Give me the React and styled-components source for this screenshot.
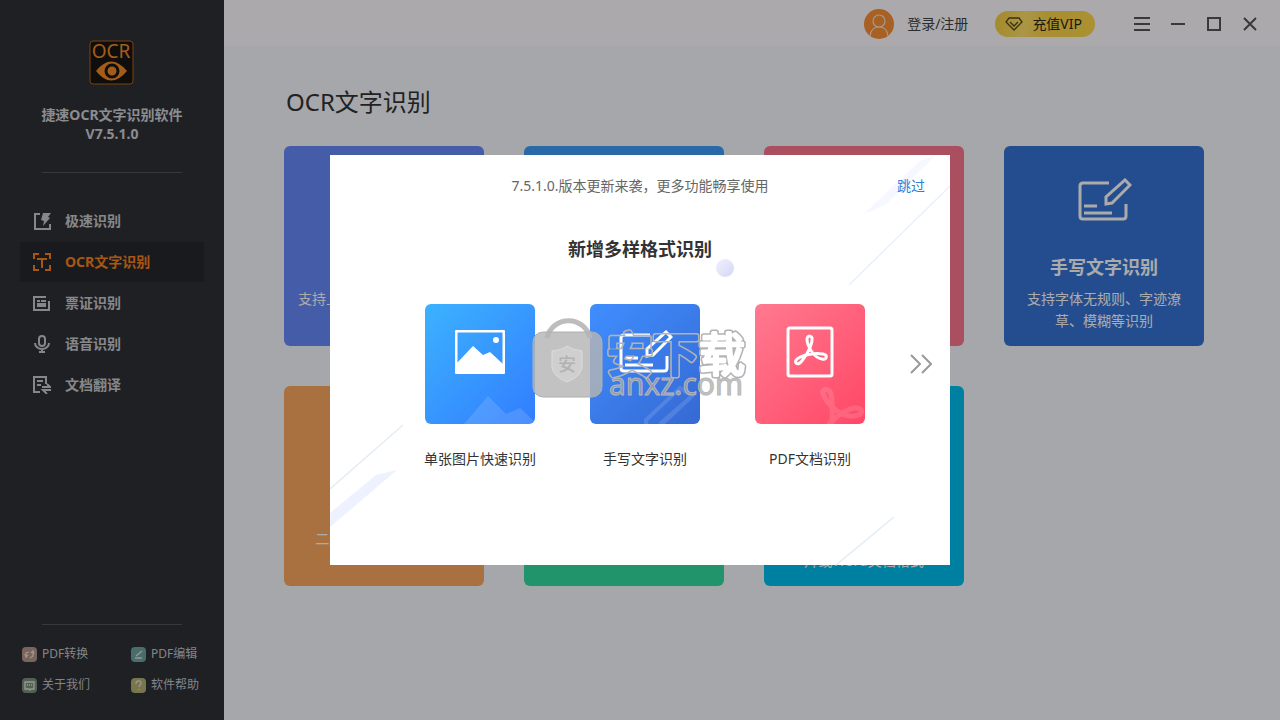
import React, { useState } from "react";
import styled, { createGlobalStyle } from "styled-components";

const navItems = [
  { name: "极速识别", icon: "fast" },
  { name: "OCR文字识别", icon: "ocr" },
  { name: "票证识别", icon: "ticket" },
  { name: "语音识别", icon: "voice" },
  { name: "文档翻译", icon: "translate" },
];

const footLinks = [
  { name: "PDF转换", icon: "convert", color: "#b8958a" },
  { name: "PDF编辑", icon: "edit", color: "#6da3a3" },
  { name: "关于我们", icon: "about", color: "#79937f" },
  { name: "软件帮助", icon: "help", color: "#b3b074" },
];

const cards = [
  { color: "#6789fb", title: "单张快速识别", desc: "支持上传单张图片,快速识别" },
  { color: "#3f9dfb", title: "批量识别", desc: "支持批量图片识别" },
  { color: "#fc768e", title: "PDF文档识别", desc: "支持PDF文档识别" },
  {
    color: "#3774d5",
    title: "手写文字识别",
    desc: "支持字体无规则、字迹潦\n草、模糊等识别",
    icon: true,
  },
  { color: "#fca95e", title: "二维码识别", desc: "二维码图片快速识别..." },
  { color: "#34dda1", title: "局部识别", desc: "支持图片局部识别" },
  { color: "#00bfef", title: "图片转换", desc: "支持将图片转为图\n片或Word文档格式" },
];

const navIcons = {
  fast: (
    <>
      <path d="M7 2H2v15h15v-5" fill="none" stroke="currentColor" strokeWidth="2" />
      <path d="M10 1h8l-3 4 2 1-7 8 1-5-3-1z" fill="currentColor" />
    </>
  ),
  ocr: (
    <path
      d="M1 6V1h5M12 1h5v5M17 12v5h-5M6 17H1v-5M4 6h10M9 6v9"
      fill="none"
      stroke="currentColor"
      strokeWidth="2"
    />
  ),
  ticket: (
    <>
      <path d="M13 3H1v13h15V7" fill="none" stroke="currentColor" strokeWidth="2" />
      <path d="M4 6h3v2H4zM8 6h5v2H8zM4 9h9v4H4z" fill="currentColor" />
    </>
  ),
  voice: (
    <>
      <rect x="6" y="1" width="6" height="10" rx="3" fill="none" stroke="currentColor" strokeWidth="2" />
      <path d="M2 8a7 6 0 0 0 14 0M9 14v3M6 17h6" fill="none" stroke="currentColor" strokeWidth="2" />
    </>
  ),
  translate: (
    <>
      <path d="M7 16H1V1h12v7M4 5h6M4 9h4" fill="none" stroke="currentColor" strokeWidth="2" />
      <path d="M9 11h8l-3-3M18 14h-8l4 4" fill="none" stroke="currentColor" strokeWidth="2" />
    </>
  ),
};

const footIcons = {
  convert: <path d="M4 10V6l3-1M3 7l1 3 2-2M11 5v4l-3 2M9 6l2-2 1 3" />,
  edit: <path d="M4 11h7M5 9l6-5" />,
  about: <path d="M3 4h9v7H9l-1 1-1-1H3zM5 7h1M7 7h1M9 7h1" />,
  help: <path d="M5 6c0-4 5-4 5-1 0 2-2 2-2 4M8 11v1" />,
};

const HandwriteIcon = () => (
  <svg width="56" height="44" viewBox="0 0 56 44" fill="none" stroke="currentColor" strokeWidth="3">
    <path d="M33 5H7Q4 5 4 8v30q0 3 3 3h40q3 0 3-3V26" />
    <path d="M8 28h13M8 35h28" />
    <path d="M30 26v-7L49 2l5 5-18 18z" />
  </svg>
);

const PictureIcon = () => (
  <svg width="50" height="44" viewBox="0 0 50 44">
    <rect x="1" y="1" width="48" height="42" rx="2" fill="none" stroke="#fff" strokeWidth="3" />
    <path d="M2 33L18 16l10 9 7-3 13 12v8H2z" fill="#fff" />
    <circle cx="41" cy="10" r="3" fill="#fff" />
  </svg>
);

const PdfIcon = () => (
  <svg width="48" height="52" viewBox="0 0 48 52" fill="none" stroke="#fff" strokeWidth="3">
    <rect x="2" y="2" width="44" height="48" rx="2" />
    <path d="M21 13c0-4 6-4 5 1 0 4-4 13-8 18-3 5-6 7-8 5-2-3 3-6 10-8s12-2 17-1c5 1 4 6-1 5-8-1-15-13-15-20z" />
  </svg>
);

const features = [
  {
    name: "单张图片快速识别",
    from: "#3cb2ff",
    to: "#327dfe",
    icon: <PictureIcon />,
    ghost: <path d="M39 120l24-28 18 18 14-6 15 14v2z" fill="#fff" />,
  },
  {
    name: "手写文字识别",
    from: "#3f8eff",
    to: "#3669d3",
    icon: <HandwriteIcon />,
    ghost: <path d="M56 120v-4l34-32 12 8-32 28M72 120l28-26" fill="none" stroke="#fff" strokeWidth="4" />,
  },
  {
    name: "PDF文档识别",
    from: "#ff7a90",
    to: "#ff4766",
    icon: <PdfIcon />,
    ghost: (
      <path
        d="M68 90c-2-6 7-6 8 0 2 8 1 18 1 32M68 90c4 10 18 24 31 22 10-1 10-8 2-8-8 0-18 7-28 17"
        fill="none"
        stroke="#fff"
        strokeWidth="5"
      />
    ),
  },
];

const Watermark = () => (
  <WatermarkArt width="224" height="84" viewBox="0 0 224 84" aria-hidden="true">
    <path d="M15 20a22 22 0 0 1 43 0" fill="none" stroke="#bdbdbd" strokeWidth="5" />
    <rect x="1" y="14" width="69" height="65" rx="10" fill="#b5b5b5" fillOpacity=".82" stroke="#b0b0b0" />
    <path d="M20 33q10-1 15-5 6 4 15 5v17q-2 9-15 14-13-5-15-14z" fill="#cfcfcf" stroke="#dcdcdc" />
    <text x="35" y="53" fontSize="18" fontWeight="500" textAnchor="middle" fill="#b2b2b2">
      安
    </text>
    <defs>
      <text id="brand" x="75" y="53" fontSize="46">
        安下载
      </text>
    </defs>
    <mask id="outline" maskUnits="userSpaceOnUse" x="70" y="0" width="154" height="84">
      <g strokeLinejoin="round">
        <use href="#brand" fill="#fff" stroke="#fff" strokeWidth="6" />
        <use href="#brand" fill="#000" stroke="#000" strokeWidth="3" />
      </g>
    </mask>
    <rect x="70" y="0" width="154" height="84" fill="#b3b3b3" mask="url(#outline)" />
    <text x="77" y="77" fontSize="30" fill="#a8a8a8" fillOpacity=".7" stroke="#b8b8b8" strokeWidth="1">
      anxz.com
    </text>
  </WatermarkArt>
);

export default function App() {
  const [current, setCurrent] = useState("OCR文字识别");
  const [showUpdate, setShowUpdate] = useState(true);

  return (
    <>
      <GlobalStyle />
      <Shell>
        <Sidebar>
          <Logo viewBox="0 0 46 45" aria-hidden="true">
            <rect x="1" y="1" width="43" height="43" rx="3" fill="#181512" stroke="#b5641a" />
            <text x="22" y="18" fontSize="19" textAnchor="middle" fill="#f38b26">
              OCR
            </text>
            <path d="M7 31q15-19 31 0-16 19-31 0z" fill="#f38b26" />
            <circle cx="23" cy="31" r="6" fill="none" stroke="#181512" strokeWidth="3" />
          </Logo>
          <AppName>
            捷速OCR文字识别软件
            <br />
            V7.5.1.0
          </AppName>
          <Divider />
          <Nav>
            {navItems.map(item => (
              <NavButton
                key={item.name}
                $active={item.name === current}
                onClick={() => setCurrent(item.name)}
              >
                <svg width="18" height="18" viewBox="0 0 18 18">
                  {navIcons[item.icon]}
                </svg>
                {item.name}
              </NavButton>
            ))}
          </Nav>
          <SidebarFoot>
            <Divider />
            <FootLinks>
              {footLinks.map(link => (
                <FootLink key={link.name} href="#">
                  <svg width="15" height="15" viewBox="0 0 15 15">
                    <rect width="15" height="15" rx="4" fill={link.color} />
                    <g fill="none" stroke="#e6e2da" strokeWidth="1.3">
                      {footIcons[link.icon]}
                    </g>
                  </svg>
                  {link.name}
                </FootLink>
              ))}
            </FootLinks>
          </SidebarFoot>
        </Sidebar>

        <Body>
          <TopBar>
            <Login>
              <svg width="30" height="30" viewBox="0 0 30 30">
                <circle cx="15" cy="15" r="15" fill="#fb8f35" />
                <g fill="none" stroke="#f4e3d6" strokeWidth="1.2">
                  <circle cx="15" cy="12" r="6" />
                  <path d="M6 27q1-9 9-9t9 9" />
                </g>
              </svg>
              登录/注册
            </Login>
            <Vip>
              <svg width="18" height="16" viewBox="0 0 18 16" fill="none" stroke="#55481a" strokeWidth="1.3">
                <path d="M4 2h10l3 4-8 8-8-8z" />
                <path d="M5 6l4 4 4-4" />
              </svg>
              充值VIP
            </Vip>
            <WindowButtons>
              <WindowButton aria-label="菜单">
                <svg width="18" height="18" viewBox="0 0 18 18">
                  <path d="M1 3h16M1 9h16M1 15h16" />
                </svg>
              </WindowButton>
              <WindowButton aria-label="最小化">
                <svg width="18" height="18" viewBox="0 0 18 18">
                  <path d="M2 9h14" />
                </svg>
              </WindowButton>
              <WindowButton aria-label="最大化">
                <svg width="18" height="18" viewBox="0 0 18 18">
                  <path d="M3 3h12v12H3z" />
                </svg>
              </WindowButton>
              <WindowButton aria-label="关闭">
                <svg width="18" height="18" viewBox="0 0 18 18">
                  <path d="M3 3l12 12M15 3L3 15" />
                </svg>
              </WindowButton>
            </WindowButtons>
          </TopBar>
          <Content>
            <PageTitle>OCR文字识别</PageTitle>
            <CardGrid>
              {cards.map(card => (
                <Card key={card.title} $color={card.color}>
                  <CardIcon>{card.icon && <HandwriteIcon />}</CardIcon>
                  <CardTitle>{card.title}</CardTitle>
                  <CardDesc>{card.desc}</CardDesc>
                </Card>
              ))}
            </CardGrid>
          </Content>
        </Body>
      </Shell>

      {showUpdate && (
        <Overlay>
          <Dialog role="dialog" aria-label="版本更新">
            <Backdrop viewBox="0 0 620 410" aria-hidden="true">
              <path d="M0 358L46 320 67 315 0 372z" fill="#eef2ff" />
              <path d="M0 334L73 270" stroke="#e2ecf6" strokeWidth="1.4" />
              <path d="M506 410L564 362" stroke="#e2ecf6" strokeWidth="1.4" />
              <path d="M519 130L620 31" stroke="#eaeff9" strokeWidth="1.4" />
              <path d="M533 60L590 6 606 0 556 49z" fill="#f6f8ff" />
              <defs>
                <linearGradient id="ball" x1="0" y1="0" x2="1" y2="1">
                  <stop offset="0" stopColor="#f1f1fe" />
                  <stop offset="1" stopColor="#d5d5f7" />
                </linearGradient>
              </defs>
              <circle cx="395" cy="113" r="9" fill="url(#ball)" />
            </Backdrop>
            <DialogTop>
              <Notice>7.5.1.0.版本更新来袭，更多功能畅享使用</Notice>
              <Skip onClick={() => setShowUpdate(false)}>跳过</Skip>
            </DialogTop>
            <DialogTitle>新增多样格式识别</DialogTitle>
            <FeatureRow>
              <FeatureList>
                {features.map(item => (
                  <Feature key={item.name}>
                    <Tile $from={item.from} $to={item.to}>
                      <Ghost viewBox="0 0 110 120">{item.ghost}</Ghost>
                      {item.icon}
                    </Tile>
                    <FeatureName>{item.name}</FeatureName>
                  </Feature>
                ))}
              </FeatureList>
              <Next aria-label="下一页">
                <svg width="22" height="22" viewBox="0 0 22 22" fill="none" stroke="#999" strokeWidth="2">
                  <path d="M1 2l9 9-9 9M12 2l9 9-9 9" />
                </svg>
              </Next>
            </FeatureRow>
            <Watermark />
          </Dialog>
        </Overlay>
      )}
    </>
  );
}

const GlobalStyle = createGlobalStyle`
  * {
    box-sizing: border-box;
  }
  body {
    margin: 0;
    font-family: "Noto Sans", "Noto Sans CJK SC", sans-serif;
    font-size: 14px;
    line-height: 20px;
  }
  button {
    border: 0;
    padding: 0;
    background: none;
    font: inherit;
    color: inherit;
    cursor: pointer;
  }
  h1, h2, h3, p {
    margin: 0;
  }
  svg {
    flex: none;
  }
`;

const Shell = styled.div`
  display: flex;
  min-height: 100vh;
`;

const Sidebar = styled.aside`
  display: flex;
  flex-direction: column;
  align-items: center;
  flex: none;
  width: 224px;
  padding: 40px 20px 25px;
  background-color: #2d3037;
  color: #d0d1d5;
`;

const Logo = styled.svg`
  width: 46px;
  height: 45px;
  overflow: visible;
`;

const AppName = styled.p`
  margin-top: 20px;
  line-height: 19px;
  font-weight: bold;
  text-align: center;
`;

const Divider = styled.hr`
  width: 140px;
  height: 1px;
  margin: 29px auto 28px;
  border: 0;
  background-color: #51545a;
`;

const Nav = styled.nav`
  display: flex;
  flex-direction: column;
  gap: 1px;
  width: 100%;
`;

const NavButton = styled.button`
  display: flex;
  align-items: center;
  gap: 14px;
  height: 40px;
  padding: 0 13px;
  font-weight: bold;
  color: ${props => (props.$active ? "#f9821f" : "#c9cace")};
  background-color: ${props => (props.$active ? "#24272d" : "transparent")};
`;

const SidebarFoot = styled.div`
  width: 100%;
  margin-top: auto;
  hr {
    margin: 0 auto 19px;
  }
`;

const FootLinks = styled.div`
  display: grid;
  grid-template-columns: 109px auto;
  row-gap: 11px;
  padding-left: 2px;
`;

const FootLink = styled.a`
  display: flex;
  align-items: center;
  gap: 5px;
  font-size: 12px;
  white-space: nowrap;
  color: #c4c5c9;
  text-decoration: none;
`;

const Body = styled.div`
  display: flex;
  flex-direction: column;
  flex: 1;
  min-width: 0;
  background-color: #f6f9fe;
`;

const TopBar = styled.header`
  display: flex;
  align-items: center;
  justify-content: flex-end;
  height: 46px;
  padding: 2px 21px 0 0;
  background-color: #fffcff;
  color: #444;
`;

const Login = styled.button`
  display: flex;
  align-items: center;
  gap: 13px;
`;

const Vip = styled.button`
  display: flex;
  align-items: center;
  gap: 9px;
  height: 26px;
  margin: 0 38px 0 27px;
  padding: 0 13px 0 10px;
  border-radius: 13px;
  background: linear-gradient(100deg, #f5cd3c, #ffe06a 30%, #fbd54a 50%, #ffd84a);
  color: #2e2818;
`;

const WindowButtons = styled.div`
  display: flex;
  gap: 18px;
`;

const WindowButton = styled.button`
  display: flex;
  svg {
    fill: none;
    stroke: #555;
    stroke-width: 2;
  }
`;

const Content = styled.main`
  padding: 38px 60px 40px;
`;

const PageTitle = styled.h1`
  padding-left: 2px;
  font-size: 24px;
  line-height: 36px;
  font-weight: normal;
  color: #333;
`;

const CardGrid = styled.div`
  display: grid;
  grid-template-columns: repeat(auto-fill, 200px);
  gap: 40px;
  margin-top: 26px;
`;

const Card = styled.article`
  display: flex;
  flex-direction: column;
  align-items: center;
  height: 200px;
  padding: 32px 14px 0;
  border-radius: 6px;
  background-color: ${props => props.$color};
  color: #fff;
  text-align: center;
`;

const CardIcon = styled.div`
  height: 44px;
`;

const CardTitle = styled.h3`
  margin-top: 32px;
  font-size: 18px;
  line-height: 26px;
`;

const CardDesc = styled.p`
  margin-top: 8px;
  line-height: 22px;
  white-space: pre;
`;

const Overlay = styled.div`
  position: fixed;
  inset: 0;
  display: flex;
  align-items: center;
  justify-content: center;
  background-color: rgba(0, 0, 0, 0.33);
`;

const Dialog = styled.section`
  position: relative;
  width: 620px;
  min-height: 410px;
  padding-top: 21px;
  background-color: #fff;
  color: #333;
`;

const Backdrop = styled.svg`
  position: absolute;
  inset: 0;
  width: 100%;
`;

const DialogTop = styled.div`
  position: relative;
  display: grid;
  grid-template-columns: 1fr auto 1fr;
  padding: 0 25px;
`;

const Notice = styled.p`
  grid-column: 2;
  color: #666;
`;

const Skip = styled.button`
  justify-self: end;
  color: #2b83d9;
`;

const DialogTitle = styled.h2`
  position: relative;
  margin-top: 39px;
  font-size: 18px;
  line-height: 28px;
  text-align: center;
`;

const FeatureRow = styled.div`
  position: relative;
  display: flex;
  justify-content: space-between;
  align-items: flex-start;
  margin-top: 41px;
  padding: 0 18px 0 95px;
`;

const FeatureList = styled.div`
  display: flex;
  gap: 55px;
`;

const Feature = styled.div`
  display: flex;
  flex-direction: column;
  align-items: center;
  gap: 25px;
  width: 110px;
`;

const Tile = styled.div`
  position: relative;
  display: flex;
  justify-content: center;
  align-items: center;
  width: 110px;
  height: 120px;
  padding-bottom: 24px;
  border-radius: 6px;
  overflow: hidden;
  color: #fff;
  background: linear-gradient(135deg, ${props => props.$from}, ${props => props.$to});
`;

const Ghost = styled.svg`
  position: absolute;
  inset: 0;
  opacity: 0.13;
`;

const FeatureName = styled.p`
  white-space: nowrap;
`;

const Next = styled.button`
  display: flex;
  align-items: center;
  height: 120px;
`;

const WatermarkArt = styled.svg`
  position: absolute;
  left: 202px;
  top: 163px;
  overflow: visible;
  pointer-events: none;
`;
